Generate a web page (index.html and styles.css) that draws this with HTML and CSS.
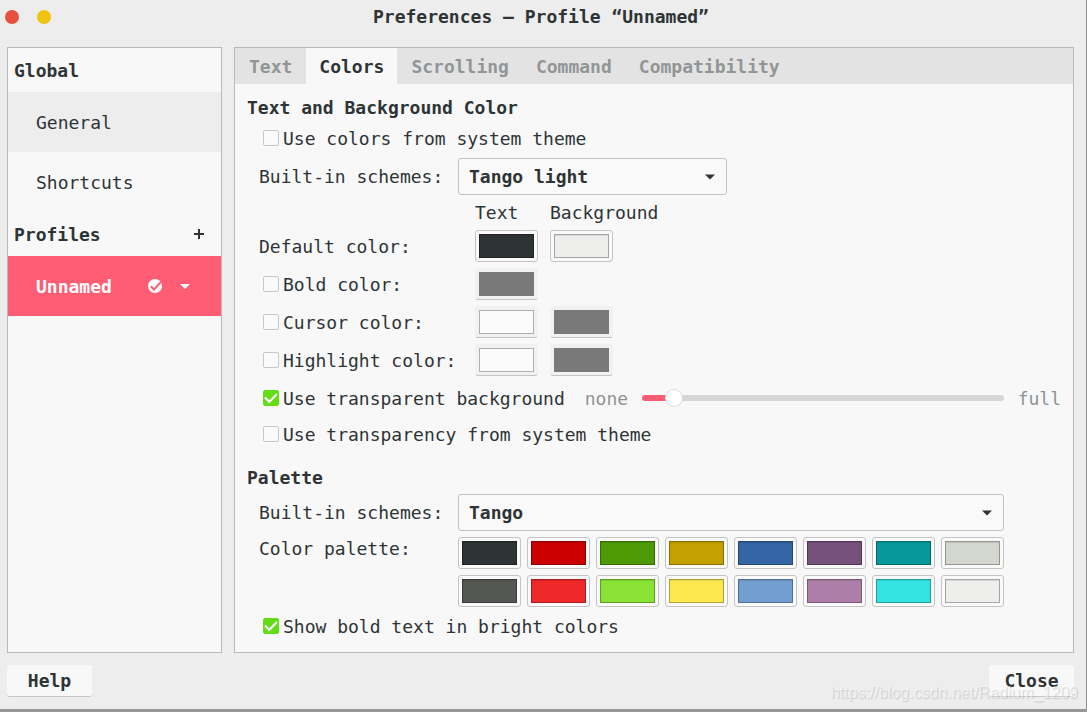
FILE: index.html
```html
<!DOCTYPE html>
<html lang="en">
<head>
<meta charset="utf-8">
<title>Preferences – Profile “Unnamed”</title>
<link rel="stylesheet" href="styles.css">
</head>
<body>
<div class="window">
  <header class="titlebar">
    <div class="window-buttons">
      <button class="dot dot-close" aria-label="Close window"></button>
      <button class="dot dot-min" aria-label="Minimize window"></button>
    </div>
    <h1 class="title">Preferences – Profile “Unnamed”</h1>
  </header>

  <div class="body">
    <nav class="sidebar">
      <h2 class="side-head">Global</h2>
      <a class="side-item hovered" href="#general">General</a>
      <a class="side-item" href="#shortcuts">Shortcuts</a>
      <h2 class="side-head">Profiles
        <button class="icon-button" aria-label="Add profile">
          <svg width="10" height="10" viewBox="0 0 10 10"><path d="M5 0v10M0 5h10" stroke="#2e3436" stroke-width="2"/></svg>
        </button>
      </h2>
      <div class="side-item selected">
        <a class="profile-link" href="#unnamed">Unnamed</a>
        <svg width="14" height="14" viewBox="0 0 14 14"><circle cx="7" cy="7" r="7" fill="#fff"/><path d="M2.8 7.2l3.2 3.3 7-7.6" fill="none" stroke="#ff5d74" stroke-width="2"/></svg>
        <button class="icon-button" aria-label="Profile menu">
          <svg width="10" height="5" viewBox="0 0 10 5"><path d="M0 0h10L5 5z" fill="#fff"/></svg>
        </button>
      </div>
    </nav>

    <main class="panel">
      <div class="tabs" role="tablist">
        <button class="tab" role="tab">Text</button>
        <button class="tab active" role="tab" aria-selected="true">Colors</button>
        <button class="tab" role="tab">Scrolling</button>
        <button class="tab" role="tab">Command</button>
        <button class="tab" role="tab">Compatibility</button>
      </div>

      <div class="content">
        <section>
          <h2 class="section-head">Text and Background Color</h2>
          <div class="rows">
            <label class="check tall"><input type="checkbox">Use colors from system theme</label>
            <div class="scheme-row">
              <label for="scheme">Built-in schemes:</label>
              <div class="select-wrap short">
                <select id="scheme"><option>Tango light</option></select>
                <svg class="arrow" width="10" height="6" viewBox="0 0 10 6"><path d="M0 0.5h10L5 5.5z" fill="#2e3436"/></svg>
              </div>
            </div>
            <div class="color-grid">
              <span></span><span>Text</span><span>Background</span>
              <span>Default color:</span>
              <input type="color" value="#2e3436" aria-label="Default text color">
              <input type="color" value="#eeeeec" aria-label="Default background color">
              <label class="check"><input type="checkbox">Bold color:</label>
              <input type="color" value="#797979" class="plain" disabled aria-label="Bold color">
              <span></span>
              <label class="check"><input type="checkbox">Cursor color:</label>
              <input type="color" value="#fbfbfb" class="empty" disabled aria-label="Cursor text color">
              <input type="color" value="#797979" class="plain" disabled aria-label="Cursor background color">
              <label class="check"><input type="checkbox">Highlight color:</label>
              <input type="color" value="#fbfbfb" class="empty" disabled aria-label="Highlight text color">
              <input type="color" value="#797979" class="plain" disabled aria-label="Highlight background color">
            </div>
            <div class="slider-row">
              <label class="check"><input type="checkbox" checked>Use transparent background</label>
              <span class="dim">none</span>
              <input class="slider" type="range" min="0" max="100" value="7" style="--fill: 9%" aria-label="Background transparency">
              <span class="dim">full</span>
            </div>
            <label class="check tall"><input type="checkbox">Use transparency from system theme</label>
          </div>
        </section>

        <section>
          <h2 class="section-head">Palette</h2>
          <div class="rows">
            <div class="palette-grid">
              <label for="palette">Built-in schemes:</label>
              <div class="select-wrap">
                <select id="palette"><option>Tango</option></select>
                <svg class="arrow" width="10" height="6" viewBox="0 0 10 6"><path d="M0 0.5h10L5 5.5z" fill="#2e3436"/></svg>
              </div>
              <span class="palette-label">Color palette:</span>
              <div class="swatches">
                <input type="color" value="#2e3436" aria-label="Color 0">
                <input type="color" value="#cc0000" aria-label="Color 1">
                <input type="color" value="#4e9a06" aria-label="Color 2">
                <input type="color" value="#c4a000" aria-label="Color 3">
                <input type="color" value="#3465a4" aria-label="Color 4">
                <input type="color" value="#75507b" aria-label="Color 5">
                <input type="color" value="#06989a" aria-label="Color 6">
                <input type="color" value="#d3d7cf" aria-label="Color 7">
                <input type="color" value="#555753" aria-label="Color 8">
                <input type="color" value="#ef2929" aria-label="Color 9">
                <input type="color" value="#8ae234" aria-label="Color 10">
                <input type="color" value="#fce94f" aria-label="Color 11">
                <input type="color" value="#729fcf" aria-label="Color 12">
                <input type="color" value="#ad7fa8" aria-label="Color 13">
                <input type="color" value="#34e2e2" aria-label="Color 14">
                <input type="color" value="#eeeeec" aria-label="Color 15">
              </div>
            </div>
            <label class="check"><input type="checkbox" checked>Show bold text in bright colors</label>
          </div>
        </section>
      </div>
    </main>
  </div>

  <footer class="actions">
    <button class="action">Help</button>
    <button class="action">Close</button>
  </footer>
  <div class="watermark">https://blog.csdn.net/Radium_1209</div>
</div>
</body>
</html>
```

FILE: styles.css
```css
* { box-sizing: border-box; }

body {
  margin: 0;
  background: #ededed;
}

body, button, select, input {
  font-family: "DejaVu Sans Mono", "Liberation Mono", monospace;
  font-size: 18px;
  line-height: 23px;
  color: #2e3436;
}

button {
  border: 0;
  padding: 0;
  background: none;
}

h1, h2 {
  margin: 0;
  font-size: 18px;
  font-weight: bold;
}

a { color: inherit; text-decoration: none; }

.window {
  position: relative;
  display: flex;
  flex-direction: column;
  min-height: 100vh;
  border-right: 1px solid #8f8f8f;
  border-bottom: 3px solid #999797;
  background: #ededed;
}

.titlebar {
  display: grid;
  grid-template-columns: 1fr auto 1fr;
  height: 47px;
  padding: 5px 9px 0 5px;
  align-items: start;
}

.window-buttons {
  display: flex;
  gap: 18px;
  padding-top: 5px;
}

.dot {
  width: 14px;
  height: 14px;
  border-radius: 50%;
}

.dot-close { background: #e94f3d; }
.dot-min { background: #f1c40f; }

.body {
  display: flex;
  flex: 1;
  gap: 12px;
  padding: 0 12px 0 7px;
}

.sidebar, .panel {
  border: 1px solid #bababa;
  background: #f8f8f8;
}

.sidebar {
  flex: 0 0 215px;
}

.side-head {
  display: flex;
  align-items: center;
  justify-content: space-between;
  height: 44px;
  padding: 0 17px 0 6px;
}

.side-item {
  display: flex;
  align-items: center;
  height: 60px;
  padding: 0 31px 0 28px;
}

.side-item.hovered { background: #ededed; }

.side-item.selected {
  gap: 18px;
  background: #ff5d74;
  color: #fff;
  font-weight: bold;
}

.profile-link { flex: 1; }

.icon-button { display: flex; }

.panel {
  flex: 1;
  min-width: 0;
}

.tabs {
  display: flex;
  gap: 1px;
  height: 36px;
  padding-left: 1px;
  background: #e3e3e3;
}

.tab {
  padding: 0 13px;
  font-weight: bold;
  color: #929595;
}

.tab.active {
  background: #f8f8f8;
  color: #2e3436;
}

.content {
  display: flex;
  flex-direction: column;
  gap: 18px;
  padding: 12px;
}

.section-head { margin-bottom: 5px; }

.rows {
  display: flex;
  flex-direction: column;
  gap: 6px;
  padding-left: 12px;
}

.check {
  display: flex;
  align-items: center;
  gap: 4px;
  min-height: 26px;
  padding-left: 4px;
}

.tall { height: 28px; }

input[type="checkbox"] {
  appearance: none;
  display: grid;
  place-items: center;
  width: 16px;
  height: 16px;
  margin: 0;
  border: 1px solid #c8c8c8;
  border-radius: 2px;
  background: #fafafa;
}

input[type="checkbox"]:checked {
  border-color: #64dd17;
  background: #64dd17;
}

input[type="checkbox"]:checked::before {
  content: "";
  width: 10px;
  height: 5px;
  margin-bottom: 4px;
  border: solid #fff;
  border-width: 0 0 2px 2px;
  transform: rotate(-45deg);
}

.scheme-row, .palette-grid {
  display: grid;
  grid-template-columns: 193px max-content;
  gap: 6px;
  align-items: center;
}

.select-wrap { display: grid; align-items: center; }
.select-wrap.short { width: 269px; }

.select-wrap > * { grid-area: 1 / 1; }

select {
  appearance: none;
  width: 100%;
  height: 37px;
  padding: 0 10px;
  border: 1px solid #c2c2c2;
  border-radius: 3px;
  background: #f9f9f9;
  font-weight: bold;
}

.arrow {
  justify-self: end;
  margin-right: 12px;
  pointer-events: none;
}

.color-grid {
  display: grid;
  grid-template-columns: 204px 63px auto;
  gap: 6px 12px;
  align-items: center;
}

input[type="color"] {
  appearance: none;
  display: block;
  width: 63px;
  height: 32px;
  padding: 3px;
  border: 1px solid #c4c4c4;
  border-radius: 3px;
  background: #fafafa;
}

input[type="color"]:disabled {
  border-color: #f1f1f1 #f1f1f1 #c4c4c4;
  background: #f1f1f1;
}

input[type="color"]::-webkit-color-swatch-wrapper { padding: 0; }

input[type="color"]::-webkit-color-swatch {
  border: 1px solid rgba(0, 0, 0, 0.3);
  border-radius: 0;
  box-shadow: inset 0 1px 1px rgba(0, 0, 0, 0.1);
}

input[type="color"].plain::-webkit-color-swatch {
  border-color: transparent;
  box-shadow: none;
}

input[type="color"].empty::-webkit-color-swatch { box-shadow: none; }

.slider-row {
  display: flex;
  align-items: center;
  gap: 14px;
  height: 32px;
}

.slider-row .check { padding-right: 6px; }

.dim { color: #8f9293; }

.slider {
  appearance: none;
  flex: 1;
  min-width: 0;
  height: 18px;
  margin: 0;
  background: none;
}

.slider::-webkit-slider-runnable-track {
  height: 6px;
  border-radius: 3px;
  background: linear-gradient(to right, #ff5d74 var(--fill), #d6d6d6 var(--fill));
}

.slider::-webkit-slider-thumb {
  appearance: none;
  width: 16px;
  height: 16px;
  margin-top: -5px;
  border-radius: 50%;
  background: #fff;
  box-shadow: 0 0 0 1px #dcdcdc;
}

.palette-label { align-self: start; }

.swatches {
  display: grid;
  grid-template-columns: repeat(8, 63px);
  gap: 6px;
}

.actions {
  display: flex;
  justify-content: space-between;
  padding: 12px 12px 12px 7px;
}

.action {
  min-width: 85px;
  height: 32px;
  border-bottom: 1px solid #c6c6c6;
  border-radius: 3px;
  background: #f8f8f8;
  font-weight: bold;
}

.watermark {
  position: absolute;
  right: 8px;
  bottom: 4px;
  font-family: "Liberation Sans", Arial, sans-serif;
  font-size: 16px;
  line-height: 24px;
  color: rgba(255, 255, 255, 0.5);
  text-shadow: 1px 1px 1px rgba(0, 0, 0, 0.15);
  pointer-events: none;
}
```
